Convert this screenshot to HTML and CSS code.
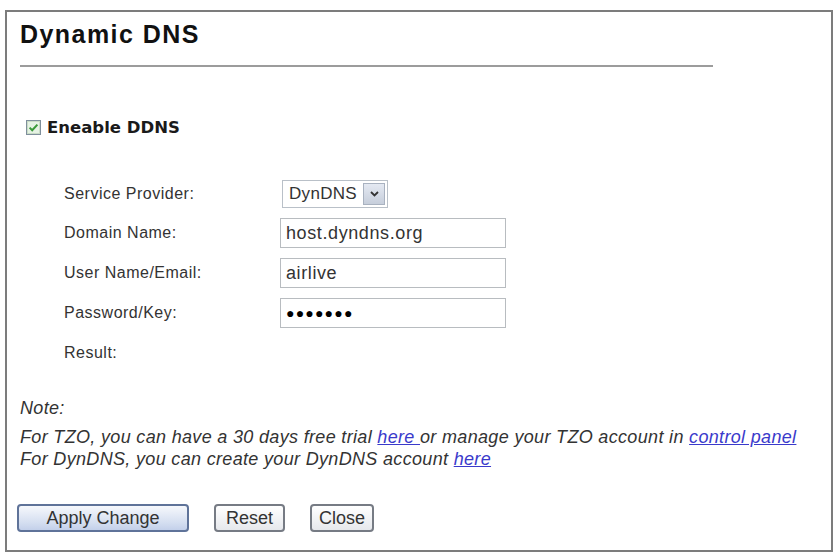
FILE: index.html
```html
<!DOCTYPE html>
<html lang="en">
<head>
<meta charset="utf-8">
<title>Dynamic DNS</title>
<link rel="stylesheet" href="styles.css">
</head>
<body>
<div class="frame">
  <h1 class="title">Dynamic DNS</h1>
  <div class="rule"></div>

  <label class="enable">
    <span class="check">
      <svg width="15" height="15" viewBox="0 0 15 15">
        <rect x="0.5" y="0.5" width="14" height="14" fill="#e6f2e4" stroke="#7f8f9c"/>
        <rect x="1.5" y="1.5" width="12" height="12" fill="none" stroke="#c9dcc6"/>
        <path d="M3.6 7.6 L6.2 10.2 L11.4 4.6" fill="none" stroke="#3a9a3a" stroke-width="2"/>
      </svg>
    </span>
    <span class="enable-text">Eneable DDNS</span>
  </label>

  <div class="form">
    <span class="label">Service Provider:</span>
    <div class="select">
      <span class="select-value">DynDNS</span>
      <span class="select-btn">
        <svg width="9" height="6" viewBox="0 0 9 6"><path d="M1 1 L4.5 4.5 L8 1" fill="none" stroke="#333" stroke-width="1.8"/></svg>
      </span>
    </div>

    <span class="label">Domain Name:</span>
    <div class="field">host.dyndns.org</div>

    <span class="label">User Name/Email:</span>
    <div class="field">airlive</div>

    <span class="label">Password/Key:</span>
    <div class="field dots">&#9679;&#9679;&#9679;&#9679;&#9679;&#9679;&#9679;</div>

    <span class="label">Result:</span>
    <span></span>
  </div>

  <div class="note">
    <p class="note-head">Note:</p>
    <p>For TZO, you can have a 30 days free trial <a href="#">here </a>or manage your TZO account in <a href="#">control panel</a></p>
    <p>For DynDNS, you can create your DynDNS account <a href="#">here</a></p>
  </div>

  <div class="actions">
    <button class="btn btn-apply">Apply Change</button>
    <button class="btn btn-reset">Reset</button>
    <button class="btn btn-close">Close</button>
  </div>
</div>
</body>
</html>
```

FILE: styles.css
```css
html, body {
  margin: 0;
  background: #ffffff;
}

body {
  font-family: "Liberation Sans", Arial, sans-serif;
  color: #222;
}

.frame {
  box-sizing: border-box;
  width: 828px;
  height: 542px;
  margin: 10px 0 0 5px;
  border: 2px solid #7c7c7c;
  padding: 8px 0 0 13px;
}

.title {
  margin: 0;
  font-size: 25px;
  line-height: 28px;
  font-weight: bold;
  letter-spacing: 1.45px;
  color: #111;
}

.rule {
  width: 693px;
  height: 2px;
  margin-top: 17px;
  background: #9c9c9c;
}

.enable {
  display: flex;
  align-items: center;
  gap: 6px;
  margin: 51px 0 0 6px;
}

.check {
  display: block;
  width: 15px;
  height: 15px;
}

.check svg {
  display: block;
}

.enable-text {
  font-family: "DejaVu Sans", Verdana, sans-serif;
  font-weight: bold;
  font-size: 16.5px;
  color: #1a1a1a;
}

.form {
  display: grid;
  grid-template-columns: 216px 226px;
  grid-auto-rows: 30px;
  grid-template-rows: 28px;
  row-gap: 10px;
  align-items: center;
  margin: 43px 0 0 44px;
}

.label {
  font-size: 16px;
  color: #333;
  letter-spacing: 0.5px;
}

.select {
  box-sizing: border-box;
  display: flex;
  align-items: stretch;
  width: 106px;
  height: 28px;
  margin-left: 2px;
  border: 1px solid #b9c0c8;
  background: #fff;
}

.select-value {
  flex: 1;
  display: flex;
  align-items: center;
  padding-left: 6px;
  font-size: 17px;
  color: #333;
  letter-spacing: 0.3px;
}

.select-btn {
  box-sizing: border-box;
  width: 22px;
  margin: 2px 2px 2px 0;
  display: flex;
  align-items: center;
  justify-content: center;
  background: linear-gradient(#e4e9f2, #c6cedb);
  border: 1px solid #a9b2c0;
}

.field {
  box-sizing: border-box;
  height: 30px;
  display: flex;
  align-items: center;
  padding-left: 5px;
  border: 1px solid #b8bcc0;
  background: #fff;
  font-size: 18px;
  letter-spacing: 0.6px;
  color: #333;
}

.field.dots {
  font-size: 14px;
  letter-spacing: 1.2px;
  color: #000;
}

.note {
  margin-top: 29px;
  font-style: italic;
  font-size: 18px;
  color: #333;
  letter-spacing: 0.33px;
}

.note p {
  margin: 0;
  line-height: 22px;
}

.note .note-head {
  margin-bottom: 7px;
}

.note a {
  color: #3a3acb;
  text-decoration: underline;
}

.actions {
  display: flex;
  gap: 25px;
  margin: 34px 0 0 -3px;
}

.btn {
  box-sizing: border-box;
  height: 28px;
  padding: 0;
  font-family: "Liberation Sans", Arial, sans-serif;
  font-size: 18px;
  color: #333;
  border-radius: 4px;
  cursor: pointer;
}

.btn-apply {
  width: 172px;
  border: 2px solid #5f7399;
  background: linear-gradient(#f6f8fc, #d4def0 70%, #c3d0ea);
}

.btn-reset,
.btn-close {
  border: 2px solid #767b84;
  background: linear-gradient(#ffffff, #e6e8ec);
}

.btn-reset {
  width: 71px;
}

.btn-close {
  width: 64px;
}
```
